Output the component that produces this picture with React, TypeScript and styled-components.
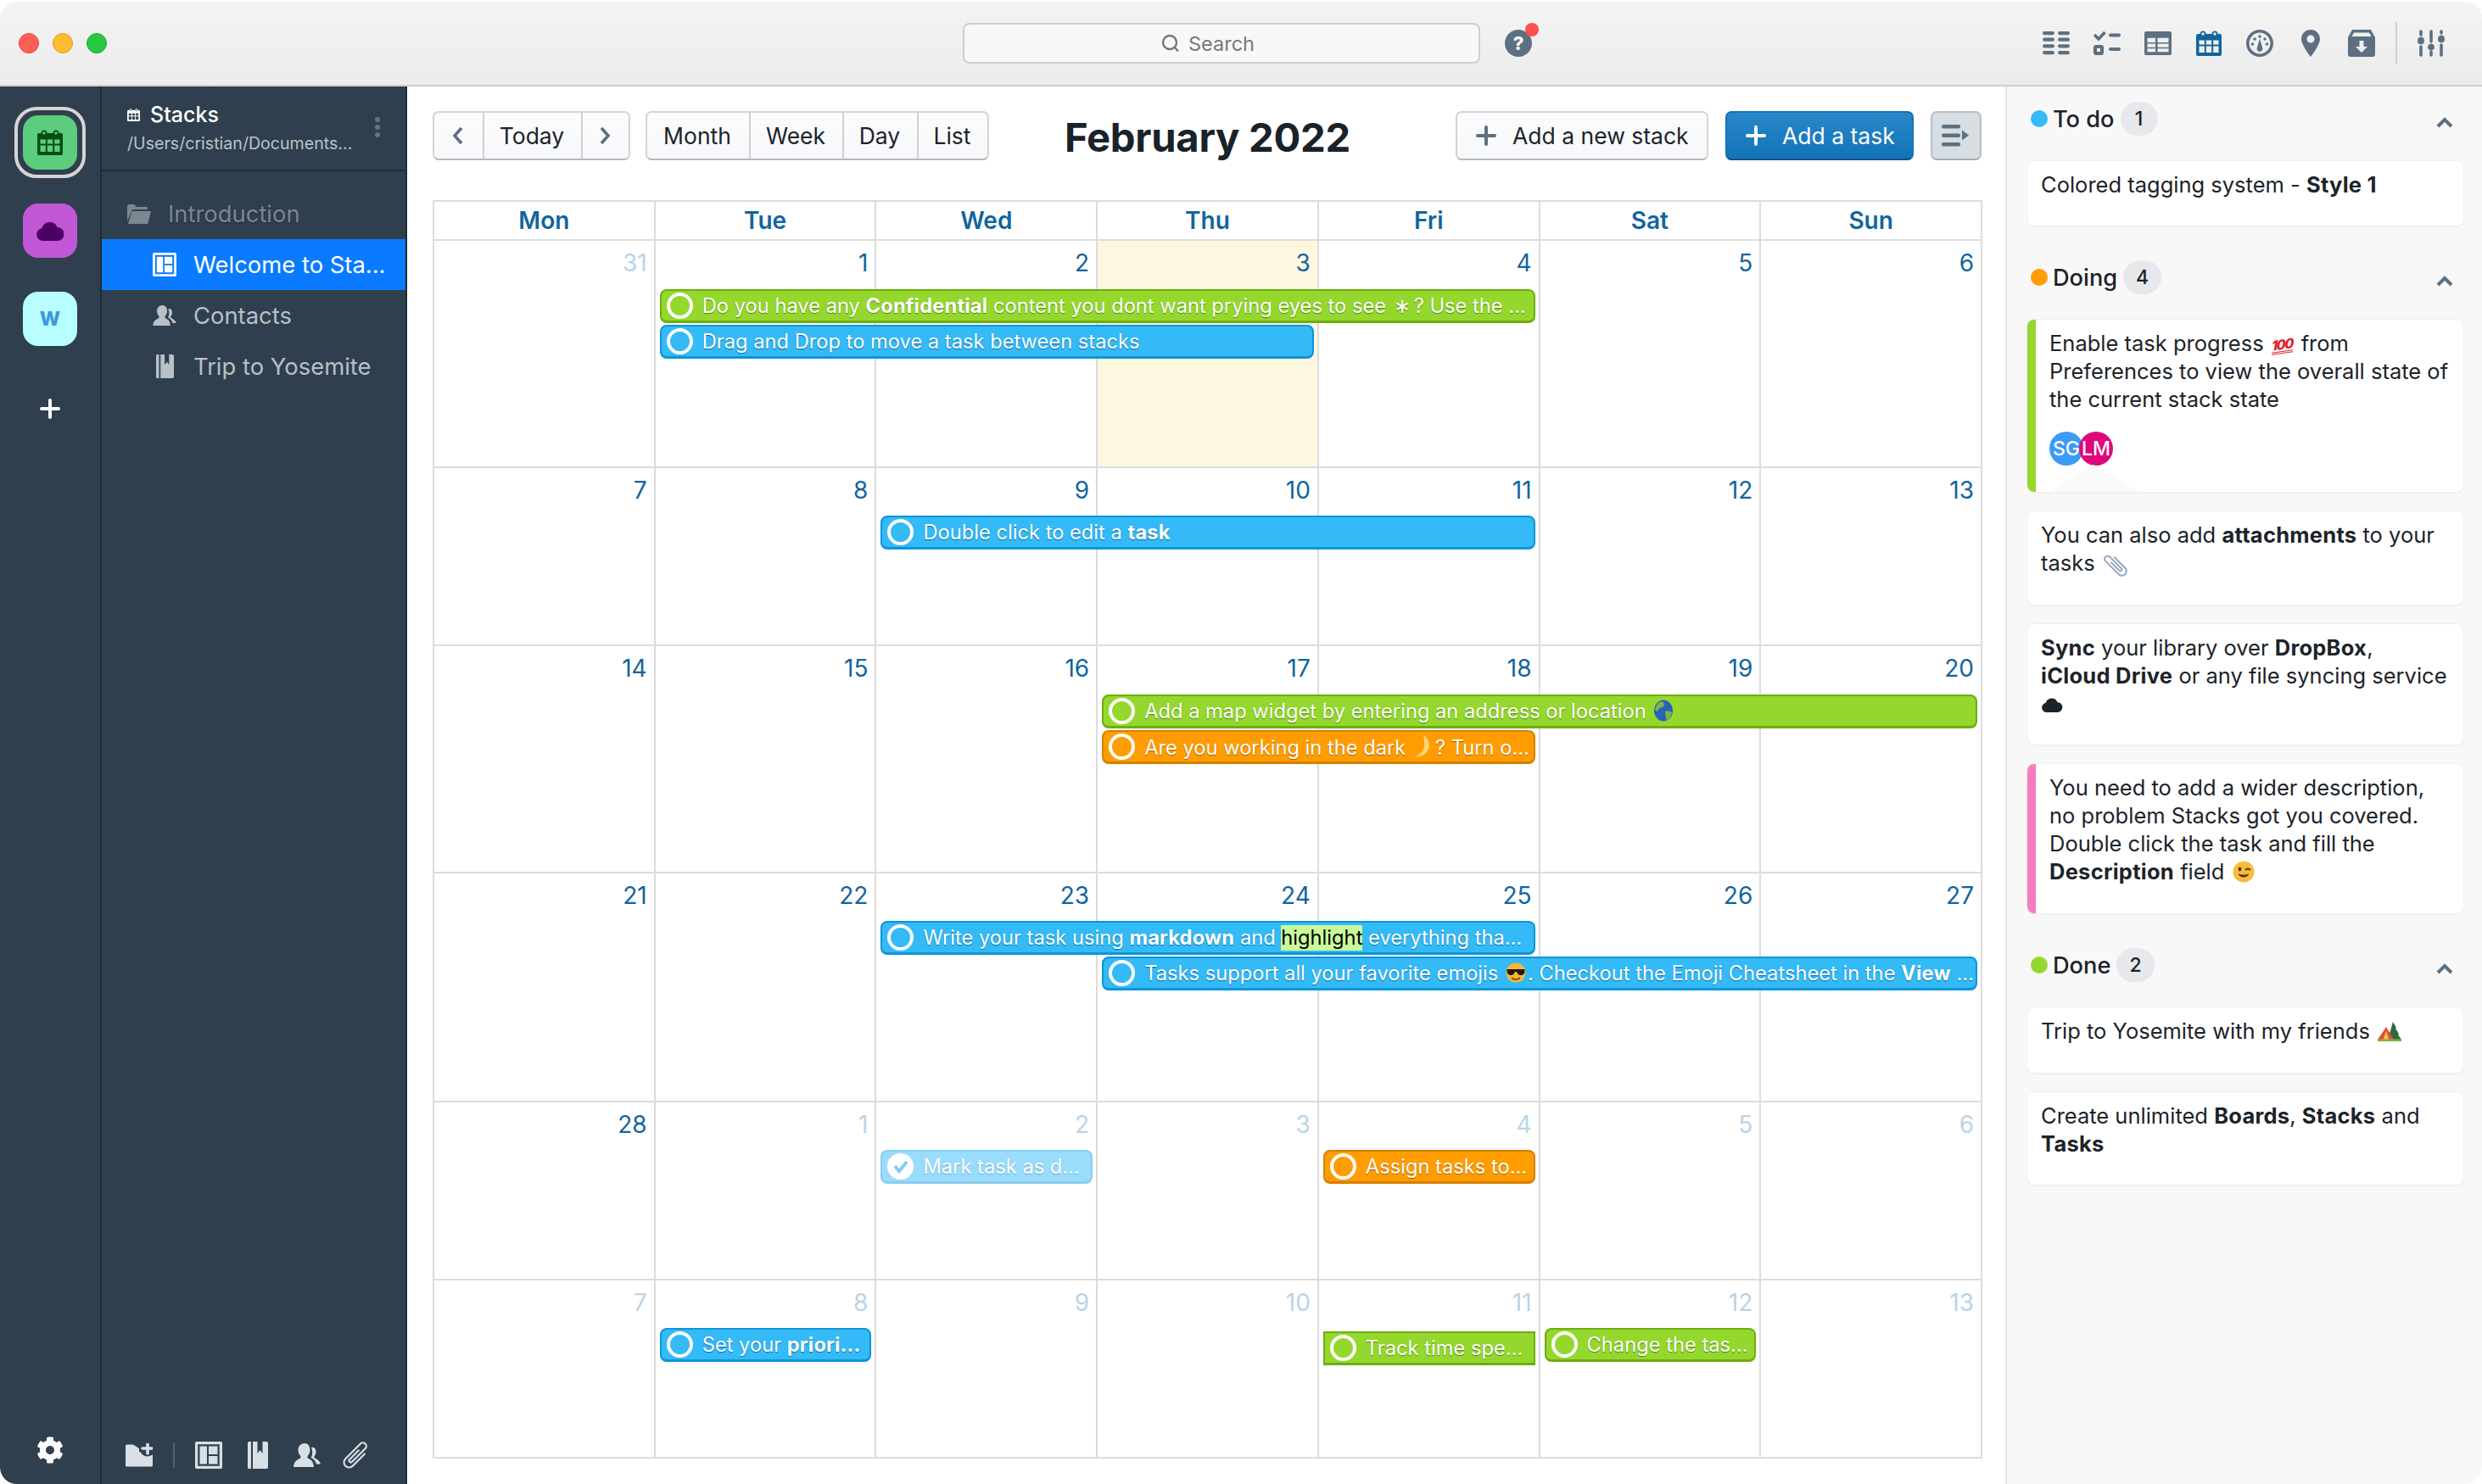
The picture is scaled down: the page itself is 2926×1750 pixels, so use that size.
import React from "react";
import styled, { createGlobalStyle, css } from "styled-components";
import { FaCog } from "react-icons/fa";

const Global = createGlobalStyle`
  html, body { margin: 0; padding: 0; background: #fff; }
  #root { width: 2926px; height: 1750px; overflow: hidden; }
  * { box-sizing: border-box; }
`;

const SLATE = "#5d7082";
const BLUE_DARK = "#11659f";

const Win = styled.div`
  width: 2926px; height: 1748px; margin-top: 2px; border-radius: 20px; overflow: hidden;
  display: flex; flex-direction: column;
  font-family: Inter, "Liberation Sans", sans-serif; color: #1c2329;
`;
const TitleBar = styled.header`
  flex: none; height: 100px; display: grid; grid-template-columns: 1135px 610px 1fr; align-items: center;
  background: linear-gradient(#f3f3f3, #ececec); border-bottom: 2px solid #cfcfcf;
`;
const Lights = styled.div`display: flex; gap: 16px; padding-left: 22px;`;
const Light = styled.span<{ $c: string; $b: string }>`
  width: 24px; height: 24px; border-radius: 50%; background: ${p => p.$c}; border: 1px solid ${p => p.$b};
`;
const Search = styled.div`
  height: 48px; background: #f8f8f8; border: 2px solid #cfcfcf; border-radius: 8px;
  display: flex; align-items: center; justify-content: center; gap: 10px; padding-right: 32px;
  font-size: 23.5px; color: #74787c;
`;
const TitleRight = styled.div`display: flex; align-items: center; padding-left: 29px; padding-right: 44px;`;
const Help = styled.div`
  position: relative; width: 32px; height: 32px; border-radius: 50%; background: ${SLATE}; color: #fff;
  font-size: 22px; font-weight: 800; line-height: 32px; text-align: center;
  &::after { content: ""; position: absolute; top: -8px; right: -8px; width: 16px; height: 16px; border-radius: 50%; background: #ff4f4f; }
`;
const ToolIcons = styled.div`display: flex; align-items: center; margin-left: auto;`;
const ToolIcon = styled.span<{ $w?: number; $c?: string }>`
  width: ${p => p.$w ?? 60}px; display: flex; justify-content: center; align-items: center; height: 32px; color: ${p => p.$c ?? SLATE};
`;
const ToolDivider = styled.span`width: 2px; height: 50px; background: #cfcfcf; margin: 0 24px 0 10px;`;

const Body = styled.div`flex: 1; min-height: 0; display: flex;`;

const Rail = styled.nav`
  flex: none; width: 120px; background: #303f4d; border-right: 2px solid #1f2b36;
  display: flex; flex-direction: column; align-items: center; padding: 24px 0 24px;
`;
const Ring = styled.div`
  width: 84px; height: 84px; border: 4px solid #d5d5d5; border-radius: 26px; display: flex; align-items: center; justify-content: center; margin-bottom: 30px;
`;
const AppIcon = styled.div<{ $bg: string; $fg: string; $gap?: number }>`
  width: 64px; height: 64px; border-radius: 18px; background: ${p => p.$bg}; color: ${p => p.$fg};
  display: flex; align-items: center; justify-content: center; margin-bottom: ${p => p.$gap ?? 0}px;
  font-size: 23px; font-weight: 800;
`;
const AddApp = styled.div`margin-top: 22px; color: #fff; display: flex;`;
const Gear = styled.div`margin-top: auto; color: #fff; display: flex; font-size: 32px;`;

const Side = styled.aside`
  flex: none; width: 360px; background: #303f4d; border-right: 2px solid #1f2b36;
  display: flex; flex-direction: column;
`;
const SideHead = styled.div`
  position: relative; height: 100px; flex: none; border-bottom: 2px solid #222f3b; padding: 17px 0 0 30px;
`;
const SideTitle = styled.div`display: flex; align-items: center; gap: 12px; font-size: 25px; font-weight: 500; color: #fff; line-height: 32px; margin-bottom: 2px;`;
const SidePath = styled.div`font-size: 19.6px; color: #bcc3c9; line-height: 32px;`;
const SideDots = styled.div`
  position: absolute; right: 30px; top: 36px; display: flex; flex-direction: column; gap: 3px;
  span { width: 6px; height: 6px; border-radius: 50%; background: #66737f; }
`;
const SideNav = styled.div`padding-top: 20px; display: flex; flex-direction: column;`;
const Folder = styled.div`
  height: 60px; display: flex; align-items: center; gap: 20px; padding-left: 30px; color: #7c8792; font-size: 27.4px;
  text-shadow: 0 1px 2px rgba(0,0,0,.3);
`;
const Item = styled.div<{ $active?: boolean }>`
  height: 60px; display: flex; align-items: center; padding-left: 60px; font-size: 27.4px;
  color: ${p => (p.$active ? "#fff" : "#b9c0c6")}; background: ${p => (p.$active ? "#0a7aff" : "transparent")};
`;
const ItemIcon = styled.span`width: 28px; margin-right: 20px; display: flex; justify-content: center; align-items: center;`;
const SideBottom = styled.div`
  margin-top: auto; display: flex; align-items: center; padding: 0 0 18px 28px; color: #d8dfe5;
`;
const BottomIcon = styled.span<{ $m: number }>`display: flex; margin-right: ${p => p.$m}px;`;
const BottomDivider = styled.span`width: 2px; height: 30px; background: #55656f; margin-right: 24px;`;

const Main = styled.main`flex: none; width: 1884px; padding: 29px 27px 0 30px; background: #fff;`;
const Toolbar = styled.div`display: flex; align-items: center; height: 58px; margin-bottom: 47px; padding-right: 1px;`;
const Group = styled.div<{ $ml?: number }>`
  display: flex; height: 58px; margin-left: ${p => p.$ml ?? 0}px; border: 2px solid #d2d4d6; border-bottom-color: #b6babd; border-radius: 7px; overflow: hidden;
  background: linear-gradient(#fcfcfe, #f6f8fa);
`;
const GroupBtn = styled.div<{ $w: number }>`
  width: ${p => p.$w}px; display: flex; align-items: center; justify-content: center; padding-right: 2px; font-size: 26.5px; color: #1c2329;
  & + & { border-left: 2px solid #cfd1d4; }
`;
const MonthTitle = styled.h1`margin: 4px 0 0 89px; font-size: 47.2px; font-weight: 700; color: #1a2229; line-height: 58px; letter-spacing: -0.3px;`;
const Actions = styled.div`margin-left: auto; display: flex; align-items: center;`;
const Btn = styled.div<{ $primary?: boolean; $w: number }>`
  width: ${p => p.$w}px; height: 58px; display: flex; align-items: center; gap: 19px; padding-left: 22px; border-radius: 7px; font-size: 26.5px; margin-right: 20px;
  ${p => p.$primary ? css`
    background: linear-gradient(#2a88c8, #1273b8); border: 2px solid #1273b8; border-bottom-color: #0d5488; color: #fff;
  ` : css`
    background: linear-gradient(#fcfcfe, #f6f8fa); border: 2px solid #d2d4d6; border-bottom-color: #b6babd; color: #1c2329;
  `}
`;
const Toggle = styled.div`
  width: 60px; height: 58px; border-radius: 7px; background: #d6dde3; border: 2px solid #b9bfc4; border-bottom-color: #a7adb2; display: flex; align-items: center; justify-content: center;
`;

const Calendar = styled.div`border-top: 2px solid #dcdcdc; border-left: 2px solid #dcdcdc;`;
const HeadRow = styled.div`display: grid; grid-template-columns: repeat(7, 1fr); height: 46px; border-bottom: 2px solid #dcdcdc;`;
const HeadCell = styled.div`
  display: flex; align-items: center; justify-content: center; font-size: 28px; font-weight: 600; color: ${BLUE_DARK}; border-right: 2px solid #dcdcdc;
`;
const Week = styled.div<{ $h: number; $top: number }>`
  display: grid; grid-template-columns: repeat(7, 1fr); grid-template-rows: ${p => p.$top}px 42px 1fr; height: ${p => p.$h}px; border-bottom: 2px solid #dcdcdc;
`;
const Day = styled.div<{ $col: number; $today?: boolean }>`
  grid-column: ${p => p.$col}; grid-row: 1 / -1; border-right: 2px solid #dcdcdc; background: ${p => (p.$today ? "#fdf7e0" : "#fff")};
  padding: 9px 8px 0 0; text-align: right; font-size: 28px; line-height: 34px;
`;
const Num = styled.span<{ $muted?: boolean }>`color: ${p => (p.$muted ? "#b8d4e8" : BLUE_DARK)};`;

const tones = {
  green: { bg: "#94d82d", bd: "#6fad0f", sh: "rgba(60,100,0,.75)" },
  blue: { bg: "#33baf7", bd: "#0c95d8", sh: "rgba(0,70,120,.7)" },
  orange: { bg: "#ff9d00", bd: "#d97f00", sh: "rgba(130,70,0,.75)" },
  done: { bg: "#9adcfb", bd: "#8accec", sh: "rgba(60,110,150,.5)" },
};
type Tone = keyof typeof tones;

const Event = styled.div<{ $col: number; $span: number; $row: number; $tone: Tone; $square?: boolean; $nudge?: number }>`
  grid-column: ${p => p.$col} / span ${p => p.$span}; grid-row: ${p => p.$row}; align-self: start; z-index: 1;
  height: 40px; margin: ${p => p.$nudge ?? 0}px 6px 0 5px; display: flex; align-items: center; gap: 11px; padding: 0 6px;
  background: ${p => tones[p.$tone].bg}; border: 2px solid ${p => tones[p.$tone].bd}; border-bottom-width: 3px;
  border-radius: ${p => (p.$square ? 0 : 8)}px; color: #fff; font-size: 23.7px; white-space: nowrap; overflow: hidden;
  text-shadow: 0 1px 1px ${p => tones[p.$tone].sh};
  b { font-weight: 700; letter-spacing: .15px; }
`;
const Circle = styled.span<{ $filled?: boolean }>`
  flex: none; width: 31px; height: 31px; border-radius: 50%; border: 4px solid #fff; display: flex; align-items: center; justify-content: center;
  background: ${p => (p.$filled ? "#fff" : "transparent")};
`;
const Hl = styled.span`background: #c9fa9a; color: #000; text-shadow: none; display: inline-block; line-height: 30px;`;
const EvText = styled.span`white-space: pre;`;
const Star = styled.span`margin: 0 4px 0 2px;`;

const Panel = styled.section`
  flex: 1; min-width: 0; background: #f8f8f8; border-left: 2px solid #e6e6e6; padding: 18px 22px 0 24px;
  display: flex; flex-direction: column;
`;
const Stack = styled.div`display: flex; flex-direction: column; gap: 23px; margin-bottom: 41px;`;
const StackHead = styled.div`display: flex; align-items: center; height: 40px; margin-bottom: 7px;`;
const Dot = styled.span<{ $c: string }>`width: 20px; height: 20px; border-radius: 50%; background: ${p => p.$c}; margin: 0 6px 0 4px;`;
const StackName = styled.span`font-size: 27.2px; font-weight: 500; color: #1c2329;`;
const Badge = styled.span`
  height: 40px; min-width: 44px; padding: 0 15px; margin-left: 7px; border-radius: 20px; background: #e6e8ec; font-size: 23px; font-weight: 500; display: flex; align-items: center; justify-content: center;
`;
const Chevron = styled.span`margin-left: auto; margin-right: 12px; display: flex; margin-top: 8px;`;
const Card = styled.div<{ $accent?: string; $pb?: number }>`
  position: relative; background: #fff; border-radius: 8px; box-shadow: 0 0 0 1px #efefef, 0 1px 2px rgba(0,0,0,.08); overflow: hidden;
  padding: 11px 12px ${p => p.$pb ?? 32}px 16px; font-size: 25.5px; line-height: 33px; color: #1c2329;
  ${p => p.$accent && css`border-left: 10px solid ${p.$accent};`}
  b { font-weight: 700; letter-spacing: .25px; }
`;
const Avatars = styled.div`display: flex; margin: 22px 0 -1px;`;
const Avatar = styled.span<{ $c: string; $over?: boolean }>`
  width: 40px; height: 40px; border-radius: 50%; background: ${p => p.$c}; color: #fff; font-size: 23px; font-weight: 500; line-height: 40px; text-align: center;
  ${p => p.$over && "margin-left: -5px;"}
`;
const Fold = styled.span`
  position: absolute; left: 14px; bottom: 0; width: 108px; height: 32px; background: #fafafa; clip-path: polygon(0 100%, 50% 0, 100% 100%);
`;
const Hundred = styled.span`
  display: inline-block; color: #e0202a; font-size: 16px; font-weight: 800; font-style: italic; letter-spacing: -1.5px; line-height: 15px; border-bottom: 3px double #e0202a; margin: 0 3px 0 2px; vertical-align: 2px; transform: skewY(-8deg);
`;
const Em = styled.svg<{ $va?: number }>`vertical-align: ${p => p.$va ?? -4}px; margin: 0 2px;`;
const CardCloud = styled.span`display: inline-flex; vertical-align: -1px;`;

/* ---------- icons ---------- */
const CalendarIcon = ({ s = 30, ring = "#efefef" }: { s?: number; ring?: string }) => (
  <svg width={s} height={s} viewBox="0 0 30 30" fill="currentColor">
    <path fillRule="evenodd" d="M2 4h26a2 2 0 0 1 2 2v22a2 2 0 0 1-2 2H2a2 2 0 0 1-2-2V6a2 2 0 0 1 2-2zM3.500 11.500v5h6.300v-5zM11.800 11.500v5h6.400v-5zM20.200 11.500v5h6.300v-5zM3.500 18.500v7.500h6.300v-7.500zM11.800 18.500v7.500h6.400v-7.500zM20.200 18.500v7.500h6.300v-7.500z" />
    <circle cx="8" cy="4" r="2.600" fill={ring} stroke="currentColor" strokeWidth="1.800" />
    <circle cx="22" cy="4" r="2.600" fill={ring} stroke="currentColor" strokeWidth="1.800" />
  </svg>
);
const ColumnsIcon = () => (
  <svg width="32" height="28" fill="currentColor">
    {[0, 7.6, 15.2, 23].map(y => (
      <g key={y}><rect x="0" y={y} width="14" height="4.200" rx="2.100" /><rect x="18" y={y} width="14" height="4.200" rx="2.100" /></g>
    ))}
  </svg>
);
const ChecklistIcon = () => (
  <svg width="32" height="28" fill="none" stroke="currentColor">
    <path d="M1 4l5 5 7.500-8" strokeWidth="3.600" />
    <rect x="2" y="18" width="8" height="8" rx="1" strokeWidth="4" />
    <path d="M20 4.500h10M20 21h10" strokeWidth="4" strokeLinecap="round" />
  </svg>
);
const TableIcon = () => (
  <svg width="32" height="28" viewBox="0 0 32 28">
    <path fillRule="evenodd" fill="currentColor" d="M2 0h28a2 2 0 0 1 2 2v24a2 2 0 0 1-2 2H2a2 2 0 0 1-2-2V2a2 2 0 0 1 2-2zM3.500 7.700v5.300h9.500V7.700zM15.500 7.700v5.300h13V7.700zM3.500 14.500v4.200h9.500v-4.200zM15.500 14.500v4.200h13v-4.200zM3.500 20.200v4h9.500v-4zM15.500 20.200v4h13v-4z" />
  </svg>
);
const GaugeIcon = () => (
  <svg width="32" height="32" viewBox="0 0 32 32" fill="currentColor">
    <circle cx="16" cy="16" r="14.200" fill="none" stroke="currentColor" strokeWidth="3.600" />
    {[[7.5, 17], [10, 11], [16, 8], [22, 11], [24.5, 17]].map(([x, y]) => <circle key={x} cx={x} cy={y} r="1.800" />)}
    <path d="M16 10.500l3.200 11a3.400 3.400 0 1 1-6.400 0z" />
  </svg>
);
const PinIcon = () => (
  <svg width="22" height="32" viewBox="0 0 22 32" fill="currentColor">
    <path fillRule="evenodd" d="M11 0C4.900 0 0 4.900 0 11c0 7 11 21 11 21s11-14 11-21C22 4.900 17.100 0 11 0zm0 15.500a4.500 4.500 0 1 1 0-9 4.500 4.500 0 0 1 0 9z" />
  </svg>
);
const ArchiveIcon = () => (
  <svg width="32" height="32" viewBox="0 0 32 32" fill="currentColor">
    <path fillRule="evenodd" d="M5 0h22l5 9v20a3 3 0 0 1-3 3H3a3 3 0 0 1-3-3V9zM7 3.500L4.500 8h23L25 3.500zM13.500 13v7H9l7 7 7-7h-4.500v-7z" />
  </svg>
);
const SlidersIcon = () => (
  <svg width="32" height="32" viewBox="0 0 32 32" fill="currentColor" stroke="currentColor" strokeLinecap="round">
    <path d="M4 2v4M4 20v10M16 2v12M16 26v4M28 2v2M28 18v12" strokeWidth="3.600" fill="none" />
    <rect x="0.500" y="9" width="7" height="8" rx="3.500" strokeWidth="1" />
    <rect x="12.500" y="17" width="7" height="7" rx="3.500" strokeWidth="1" />
    <rect x="24.500" y="7" width="7" height="8" rx="3.500" strokeWidth="1" />
  </svg>
);
const ChevronUp = () => (
  <svg width="20" height="14" fill="none" stroke={SLATE} strokeWidth="4"><path d="M2 12l8-8 8 8" /></svg>
);
const NavArrow = ({ right }: { right?: boolean }) => (
  <svg width="14" height="22" fill="none" stroke={SLATE} strokeWidth="3.600">
    <path d={right ? "M3 2l8 9-8 9" : "M11 2l-8 9 8 9"} />
  </svg>
);
const PlusIcon = ({ c, s = 24, w = 4 }: { c: string; s?: number; w?: number }) => (
  <svg width={s} height={s} viewBox="0 0 24 24" fill="none" stroke={c} strokeWidth={w} strokeLinecap="round">
    <path d="M12 2v20M2 12h20" />
  </svg>
);
const SearchIcon = () => (
  <svg width="22" height="22" fill="none" stroke="#74787c" strokeWidth="2.400"><circle cx="10" cy="10" r="8" /><path d="M15.500 15.500l4.500 5" /></svg>
);
const PanelToggleIcon = () => (
  <svg width="34" height="26" fill={SLATE}>
    <rect x="0" y="0" width="22" height="4.400" rx="2" /><rect x="0" y="10.500" width="22" height="4.400" rx="2" /><rect x="0" y="21" width="22" height="4.400" rx="2" />
    <path d="M24 6.500l8 6-8 6z" />
  </svg>
);
const CloudShape = ({ w = 32, h = 24 }: { w?: number; h?: number }) => (
  <svg width={w} height={h} viewBox="0 0 32 24" fill="currentColor">
    <path d="M7.500 24a7.500 7.500 0 0 1-1-14.900A9.500 9.500 0 0 1 24.500 8a8 8 0 0 1 0 16z" />
  </svg>
);
const BoardIcon = ({ s = 28 }: { s?: number }) => (
  <svg width={s} height={s} viewBox="0 0 32 32" fill="currentColor">
    <rect x="1.500" y="1.500" width="29" height="29" rx="1.500" fill="none" stroke="currentColor" strokeWidth="3.500" />
    <rect x="5.500" y="5.500" width="8.500" height="21" /><rect x="16" y="5.500" width="10.500" height="9.500" /><rect x="16" y="17" width="10.500" height="9.500" />
  </svg>
);
const BookIcon = ({ w = 24, h = 32 }: { w?: number; h?: number }) => (
  <svg width={w} height={h} viewBox="0 0 24 32" fill="currentColor">
    <path d="M1.500 0H4v32H1.500A1.500 1.500 0 0 1 0 30.500v-29A1.500 1.500 0 0 1 1.500 0z" />
    <path d="M6 0h5.500v14l3-4 3 4V0H22a2 2 0 0 1 2 2v28a2 2 0 0 1-2 2H6z" />
  </svg>
);
const PeopleIcon = ({ w = 32, h = 28 }: { w?: number; h?: number }) => (
  <svg width={w} height={h} viewBox="0 0 32 28" fill="currentColor">
    <path d="M13 0c4 0 6.500 3.300 6.500 7.800 0 3-1.200 5.700-2.800 7.200-.6 1.200-.2 2.500 1.300 3.300 3.300 1.300 5.500 3.300 6 9.700H0c.6-6.400 3.700-8.400 7-9.700 1.500-.8 1.900-2.100 1.300-3.300-1.600-1.500-2.800-4.200-2.800-7.200C5.500 3.300 9 0 13 0z" />
    <path d="M21 5c3.200-1 5.500 1.500 5.500 5 0 2.300-1 4.300-2 5.300-.4 1 .1 1.900 1.200 2.500 2.700 1.300 5.300 3.300 6.300 6.700h-5c-1-3.700-3-6-6.500-7.500 1.800-2.500 2.500-7.500.5-12z" />
  </svg>
);
const CLIP_PATH = "M6 -8V12A6 6 0 0 1 -6 12V-13A4 4 0 0 1 2 -13V9A2 2 0 0 1 -2 9V-6";
const ClipIcon = () => (
  <svg width="32" height="32" viewBox="0 0 32 32" fill="none" stroke="currentColor" strokeWidth="2.200" strokeLinecap="round">
    <path d={CLIP_PATH} transform="translate(16 16) rotate(45)" />
  </svg>
);
const FolderOpen = () => (
  <svg width="28" height="23" viewBox="0 0 28 23" fill="currentColor">
    <path d="M0 2a2 2 0 0 1 2-2h6l3 3h12a1 1 0 0 1 1 1v2H6L0 20z" />
    <path d="M5.500 8H28l-3.500 14a1 1 0 0 1-1 1H1z" />
  </svg>
);
const FolderPlus = () => (
  <svg width="32" height="28" viewBox="0 0 32 28" fill="currentColor">
    <path d="M0 3a1.500 1.500 0 0 1 1.500-1.500H9l7 4.500v4H32v16a1.500 1.500 0 0 1-1.500 1.500h-29A1.500 1.500 0 0 1 0 26.500z" />
    <circle cx="26" cy="6" r="9.500" fill="#303f4d" />
    <path d="M26 0v12M20 6h12" stroke="currentColor" strokeWidth="3.600" strokeLinecap="round" />
  </svg>
);

/* hand drawn emoji: no colour emoji font is installed */
const Globe = () => (
  <Em width="24" height="26" viewBox="0 0 24 26">
    <ellipse cx="12" cy="13" rx="11" ry="12.500" fill="#2a62b8" />
    <path d="M9 2c4 1 5 4 3 6s-5 1-6 4-2 2-4 0c1-5 3-8 7-10zM14 14c3-1 7 0 8 1-1 5-3 8-6 9-2-3-1-5-2-10z" fill="#7cb342" />
  </Em>
);
const Moon = () => (
  <Em width="24" height="28" viewBox="0 0 24 28">
    <path d="M12 1c6 4 8 10 6 16s-8 10-16 9c6-2 10-6 11-12 .6-4 0-9-1-13z" fill="#f5d875" />
  </Em>
);
const Shades = () => (
  <Em width="24" height="26" viewBox="0 0 24 26">
    <circle cx="12" cy="13" r="11.500" fill="#f7b733" />
    <path d="M1.500 9h21v2c0 3-2 5-4.500 5s-4-1.500-5-4h-2c-1 2.500-2.500 4-5 4S1.500 14 1.500 11z" fill="#1a1a1a" />
    <path d="M7 19c3 2.500 7 2.500 10 0" stroke="#7a4a10" strokeWidth="1.800" fill="none" />
  </Em>
);
const Clip = () => (
  <Em width="30" height="30" viewBox="-17 -17 34 34" $va={-8}>
    <path d={CLIP_PATH} transform="rotate(-45)" fill="none" stroke="#8fa9bf" strokeWidth="2.200" strokeLinecap="round" />
  </Em>
);
const Wink = () => (
  <Em width="26" height="26" viewBox="0 0 26 26">
    <circle cx="13" cy="13" r="12.500" fill="#f9bb3a" />
    <ellipse cx="8.500" cy="10" rx="1.800" ry="2.400" fill="#4d2f0c" />
    <path d="M15 11c2-2 4-2 6 0" stroke="#4d2f0c" strokeWidth="1.800" fill="none" />
    <path d="M7 16c3 4 9 4 12 0-3 1.500-9 1.500-12 0z" fill="#4d2f0c" stroke="#4d2f0c" />
  </Em>
);
const Camp = () => (
  <Em width="28" height="24" viewBox="0 0 28 24">
    <path d="M18 0l4 7-1 1 4 6-1 1 4 6H12z" fill="#2f6b39" />
    <path d="M10 6L0 21h19z" fill="#e0503a" />
    <path d="M10 11l-3.500 10h7z" fill="#f4c24b" />
    <path d="M0 20.500h28v2.500H0z" fill="#7cb342" />
  </Em>
);
const Check = () => (
  <svg width="20" height="18" fill="none" stroke="#7fcff5" strokeWidth="4"><path d="M3 8l5 6 9-11" /></svg>
);

/* ---------- data ---------- */
type Ev = { col: number; span: number; row: number; tone: Tone; body: React.ReactNode; done?: boolean; square?: boolean; nudge?: number };
type W = { h: number; top: number; days: number[]; muted: number[]; today?: number; events: Ev[] };

const weeks: W[] = [
  {
    h: 268, top: 57, days: [31, 1, 2, 3, 4, 5, 6], muted: [0], today: 3,
    events: [
      { col: 2, span: 4, row: 2, tone: "green", body: <>Do you have any <b>Confidential</b> content you dont want prying eyes to see <Star>∗</Star>? Use the …</> },
      { col: 2, span: 3, row: 3, tone: "blue", body: <>Drag and Drop to move a task between stacks</> },
    ],
  },
  {
    h: 210, top: 56, days: [7, 8, 9, 10, 11, 12, 13], muted: [],
    events: [{ col: 3, span: 3, row: 2, tone: "blue", body: <>Double click to edit a <b>task</b></> }],
  },
  {
    h: 268, top: 57, days: [14, 15, 16, 17, 18, 19, 20], muted: [],
    events: [
      { col: 4, span: 4, row: 2, tone: "green", body: <>Add a map widget by entering an address or location <Globe /></> },
      { col: 4, span: 2, row: 3, tone: "orange", body: <>Are you working in the dark <Moon />? Turn o…</> },
    ],
  },
  {
    h: 270, top: 56, days: [21, 22, 23, 24, 25, 26, 27], muted: [],
    events: [
      { col: 3, span: 3, row: 2, tone: "blue", body: <>Write your task using <b>markdown</b> and <Hl>highlight</Hl> everything tha…</> },
      { col: 4, span: 4, row: 3, tone: "blue", body: <>Tasks support all your favorite emojis <Shades />. Checkout the Emoji Cheatsheet in the <b>View</b> …</> },
    ],
  },
  {
    h: 210, top: 56, days: [28, 1, 2, 3, 4, 5, 6], muted: [1, 2, 3, 4, 5, 6],
    events: [
      { col: 3, span: 1, row: 2, tone: "done", done: true, body: <>Mark task as d…</> },
      { col: 5, span: 1, row: 2, tone: "orange", body: <>Assign tasks to…</> },
    ],
  },
  {
    h: 210, top: 56, days: [7, 8, 9, 10, 11, 12, 13], muted: [0, 1, 2, 3, 4, 5, 6],
    events: [
      { col: 2, span: 1, row: 2, tone: "blue", body: <>Set your <b>priori…</b></> },
      { col: 5, span: 1, row: 2, tone: "green", square: true, nudge: 4, body: <>Track time spe…</> },
      { col: 6, span: 1, row: 2, tone: "green", body: <>Change the tas…</> },
    ],
  },
];

export default function App() {
  return (
    <>
      <Global />
      <Win>
        <TitleBar>
          <Lights>
            <Light $c="#ff5f57" $b="#e0443e" />
            <Light $c="#febc2e" $b="#e09e1a" />
            <Light $c="#28c840" $b="#1aab29" />
          </Lights>
          <Search><SearchIcon />Search</Search>
          <TitleRight>
            <Help>?</Help>
            <ToolIcons>
              <ToolIcon><ColumnsIcon /></ToolIcon>
              <ToolIcon><ChecklistIcon /></ToolIcon>
              <ToolIcon><TableIcon /></ToolIcon>
              <ToolIcon $c={BLUE_DARK}><CalendarIcon /></ToolIcon>
              <ToolIcon><GaugeIcon /></ToolIcon>
              <ToolIcon><PinIcon /></ToolIcon>
              <ToolIcon><ArchiveIcon /></ToolIcon>
              <ToolDivider />
              <ToolIcon $w={32}><SlidersIcon /></ToolIcon>
            </ToolIcons>
          </TitleRight>
        </TitleBar>
        <Body>
          <Rail>
            <Ring><AppIcon $bg="#5ccc7f" $fg="#05500f"><CalendarIcon ring="#5ccc7f" /></AppIcon></Ring>
            <AppIcon $bg="#c058d6" $fg="#4b0062" $gap={40}><CloudShape /></AppIcon>
            <AppIcon $bg="#b8fdff" $fg="#3f97d8" $gap={40}>W</AppIcon>
            <AddApp><PlusIcon c="#fff" /></AddApp>
            <Gear><FaCog /></Gear>
          </Rail>
          <Side>
            <SideHead>
              <SideTitle><CalendarIcon s={15} ring="#303f4d" />Stacks</SideTitle>
              <SidePath>/Users/cristian/Documents...</SidePath>
              <SideDots><span /><span /><span /></SideDots>
            </SideHead>
            <SideNav>
              <Folder><FolderOpen />Introduction</Folder>
              <Item $active><ItemIcon><BoardIcon /></ItemIcon>Welcome to Sta...</Item>
              <Item><ItemIcon><PeopleIcon w={28} h={24} /></ItemIcon>Contacts</Item>
              <Item><ItemIcon><BookIcon w={21} h={28} /></ItemIcon>Trip to Yosemite</Item>
            </SideNav>
            <SideBottom>
              <BottomIcon $m={24}><FolderPlus /></BottomIcon>
              <BottomDivider />
              <BottomIcon $m={30}><BoardIcon s={32} /></BottomIcon>
              <BottomIcon $m={30}><BookIcon /></BottomIcon>
              <BottomIcon $m={26}><PeopleIcon /></BottomIcon>
              <BottomIcon $m={0}><ClipIcon /></BottomIcon>
            </SideBottom>
          </Side>
          <Main>
            <Toolbar>
              <Group>
                <GroupBtn $w={57}><NavArrow /></GroupBtn>
                <GroupBtn $w={116}>Today</GroupBtn>
                <GroupBtn $w={56}><NavArrow right /></GroupBtn>
              </Group>
              <Group $ml={18}>
                <GroupBtn $w={120}>Month</GroupBtn>
                <GroupBtn $w={110}>Week</GroupBtn>
                <GroupBtn $w={88}>Day</GroupBtn>
                <GroupBtn $w={83}>List</GroupBtn>
              </Group>
              <MonthTitle>February 2022</MonthTitle>
              <Actions>
                <Btn $w={298}><PlusIcon c={SLATE} />Add a new stack</Btn>
                <Btn $primary $w={222}><PlusIcon c="#fff" />Add a task</Btn>
                <Toggle><PanelToggleIcon /></Toggle>
              </Actions>
            </Toolbar>
            <Calendar>
              <HeadRow>
                {["Mon", "Tue", "Wed", "Thu", "Fri", "Sat", "Sun"].map(d => <HeadCell key={d}>{d}</HeadCell>)}
              </HeadRow>
              {weeks.map((w, i) => (
                <Week key={i} $h={w.h} $top={w.top}>
                  {w.days.map((d, j) => (
                    <Day key={j} $col={j + 1} $today={w.today === d && !w.muted.includes(j)}>
                      <Num $muted={w.muted.includes(j)}>{d}</Num>
                    </Day>
                  ))}
                  {w.events.map((e, k) => (
                    <Event key={k} $col={e.col} $span={e.span} $row={e.row} $tone={e.tone} $square={e.square} $nudge={e.nudge}>
                      <Circle $filled={e.done}>{e.done && <Check />}</Circle>
                      <EvText>{e.body}</EvText>
                    </Event>
                  ))}
                </Week>
              ))}
            </Calendar>
          </Main>
          <Panel>
            <Stack>
              <StackHead>
                <Dot $c="#33baf7" /><StackName>To do</StackName><Badge>1</Badge><Chevron><ChevronUp /></Chevron>
              </StackHead>
              <Card>Colored tagging system - <b>Style 1</b></Card>
            </Stack>
            <Stack>
              <StackHead>
                <Dot $c="#ff9d00" /><StackName>Doing</StackName><Badge>4</Badge><Chevron><ChevronUp /></Chevron>
              </StackHead>
              <Card $accent="#94d82d">
                Enable task progress <Hundred>100</Hundred> from Preferences to view the overall state of the current stack state
                <Avatars><Avatar $c="#3b9bf5">SG</Avatar><Avatar $c="#e0077d" $over>LM</Avatar></Avatars>
                <Fold />
              </Card>
              <Card>You can also add <b>attachments</b> to your tasks <Clip /></Card>
              <Card><b>Sync</b> your library over <b>DropBox</b>,<br /><b>iCloud Drive</b> or any file syncing service<br /><CardCloud><CloudShape w={26} h={18} /></CardCloud></Card>
              <Card $accent="#f67ebf" $pb={33}>You need to add a wider description, no problem Stacks got you covered. Double click the task and fill the <b>Description</b> field <Wink /></Card>
            </Stack>
            <Stack>
              <StackHead>
                <Dot $c="#94d82d" /><StackName>Done</StackName><Badge>2</Badge><Chevron><ChevronUp /></Chevron>
              </StackHead>
              <Card $pb={33}>Trip to Yosemite with my friends <Camp /></Card>
              <Card>Create unlimited <b>Boards</b>, <b>Stacks</b> and <b>Tasks</b></Card>
            </Stack>
          </Panel>
        </Body>
      </Win>
    </>
  );
}
